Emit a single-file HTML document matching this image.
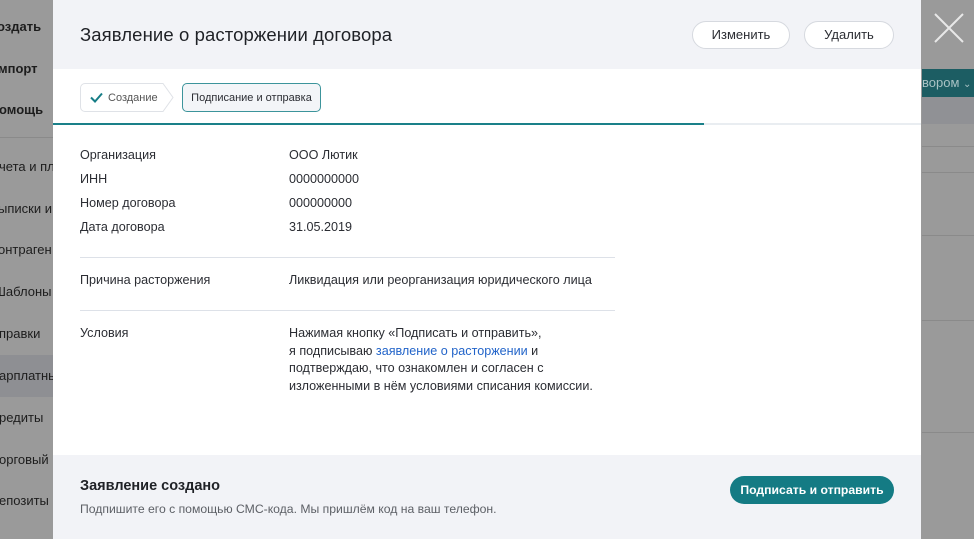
<!DOCTYPE html>
<html><head><meta charset="utf-8"><style>
*{margin:0;padding:0;box-sizing:border-box}
body{width:974px;height:539px;overflow:hidden;position:relative;font-family:"Liberation Sans",sans-serif;color:#2b2d33;background:#9a9a9a}
.side{position:absolute;left:0;top:0;width:53px;height:539px;background:#9a9a9a;color:#1d1d1d;font-size:13px;overflow:hidden;white-space:nowrap}
.side div{position:absolute;left:0;right:0;height:20px;line-height:20px}
.right{position:absolute;left:921px;top:0;width:53px;height:539px;background:#9a9a9a;overflow:hidden}
.modal{position:absolute;left:53px;top:0;width:868px;height:539px;background:#fff}
.hdr{position:absolute;left:0;top:0;width:868px;height:69px;background:#f2f3f7}
.hdr h1{position:absolute;left:27px;top:24px;font-size:18.5px;font-weight:normal;color:#1f2126;letter-spacing:0.1px}
.btn{position:absolute;top:21px;height:28px;border:1px solid #d6d9df;border-radius:14px;background:#fff;font-size:13px;text-align:center;line-height:26px;color:#2b2d33}
.t{position:absolute;font-size:12.6px;line-height:17px;white-space:nowrap}
.hr{position:absolute;left:27px;width:535px;height:1px;background:#dde1e8}
.ftr{position:absolute;left:0;top:455px;width:868px;height:84px;background:#f2f3f7}
</style></head><body>
<div class="side">
<div style="top:17px;left:-3px;font-weight:bold">оздать</div>
<div style="top:59px;left:-2px;font-weight:bold">мпорт</div>
<div style="top:100px;left:-1px;font-weight:bold">омощь</div>
<div style="top:137px;height:1px;background:#8a8a8a"></div>
<div style="top:157px;left:-1px">чета и пл</div>
<div style="top:199px;left:-2px">ыписки и</div>
<div style="top:240px;left:-2px">онтраген</div>
<div style="top:282px;left:-6px">Шаблоны</div>
<div style="top:324px;left:-1px">правки</div>
<div style="top:355px;height:42px;background:#8e8f93"></div>
<div style="top:366px;left:-1px">арплатнь</div>
<div style="top:408px;left:-1px">редиты</div>
<div style="top:450px;left:-1px">орговый</div>
<div style="top:491px;left:-1px">епозиты</div>
</div>
<div class="right">
<svg style="position:absolute;left:13px;top:13px" width="30" height="30"><path d="M1 1L29 29M29 1L1 29" stroke="#e8e8e8" stroke-width="2"/></svg>
<div style="position:absolute;left:1px;top:69px;width:52px;height:28px;background:#1c5d63;color:#a9c2c4;font-size:13px;line-height:28px;white-space:nowrap">вором <span style="font-size:10px">&#8964;</span></div>
<div style="position:absolute;left:1px;top:97px;width:52px;height:27px;background:#909195"></div>
<div style="position:absolute;left:1px;top:146px;width:52px;height:1px;background:#8a8a8a"></div>
<div style="position:absolute;left:1px;top:172px;width:52px;height:1px;background:#8a8a8a"></div>
<div style="position:absolute;left:1px;top:235px;width:52px;height:1px;background:#8a8a8a"></div>
<div style="position:absolute;left:1px;top:320px;width:52px;height:1px;background:#8a8a8a"></div>
<div style="position:absolute;left:1px;top:432px;width:52px;height:1px;background:#8a8a8a"></div>
</div>
<div class="modal">
<div class="hdr"><h1>Заявление о расторжении договора</h1>
<div class="btn" style="left:639px;width:98px">Изменить</div>
<div class="btn" style="left:751px;width:90px">Удалить</div></div>
<svg style="position:absolute;left:27px;top:83px" width="95" height="29"><path d="M5 .5H83L93 14.5L83 28.5H5A4.5 4.5 0 0 1 .5 24V5A4.5 4.5 0 0 1 5 .5Z" fill="#fff" stroke="#dfe2e7"/><path d="M11 14.5L15 18.5L22 10.5" fill="none" stroke="#167d86" stroke-width="2"/></svg>
<div class="t" style="left:55px;top:90px;font-size:11px;color:#555">Создание</div>
<div style="position:absolute;left:129px;top:83px;width:139px;height:29px;border:1px solid #3c949b;border-radius:5px;background:#f3f5f8;font-size:11px;line-height:29px;text-align:center;color:#2b2d33">Подписание и отправка</div>
<div style="position:absolute;left:0;top:123px;width:868px;height:2px;background:#e9edf1"></div>
<div style="position:absolute;left:0;top:123px;width:651px;height:2px;background:#1a8089"></div>
<div class="t" style="left:27px;top:147px">Организация</div><div class="t" style="left:236px;top:147px">ООО Лютик</div>
<div class="t" style="left:27px;top:171px">ИНН</div><div class="t" style="left:236px;top:171px">0000000000</div>
<div class="t" style="left:27px;top:195px">Номер договора</div><div class="t" style="left:236px;top:195px">000000000</div>
<div class="t" style="left:27px;top:219px">Дата договора</div><div class="t" style="left:236px;top:219px">31.05.2019</div>
<div class="hr" style="top:257px"></div>
<div class="t" style="left:27px;top:272px">Причина расторжения</div><div class="t" style="left:236px;top:272px">Ликвидация или реорганизация юридического лица</div>
<div class="hr" style="top:310px"></div>
<div class="t" style="left:27px;top:325px">Условия</div>
<div class="t" style="left:236px;top:325px;line-height:17.5px">Нажимая кнопку «Подписать и отправить»,<br>я подписываю <span style="color:#2264c9">заявление о расторжении</span> и<br>подтверждаю, что ознакомлен и согласен с<br>изложенными в нём условиями списания комиссии.</div>
<div class="ftr">
<div class="t" style="left:27px;top:23px;font-size:14.5px;font-weight:bold;color:#1f2126">Заявление создано</div>
<div class="t" style="left:27px;top:46px;font-size:12.2px;color:#5d6066">Подпишите его с помощью СМС-кода. Мы пришлём код на ваш телефон.</div>
<div style="position:absolute;left:677px;top:21px;width:164px;height:28px;border-radius:14px;background:#147b84;color:#fff;font-size:12.2px;font-weight:bold;line-height:28px;text-align:center">Подписать и отправить</div>
</div>
</div>
</body></html>
